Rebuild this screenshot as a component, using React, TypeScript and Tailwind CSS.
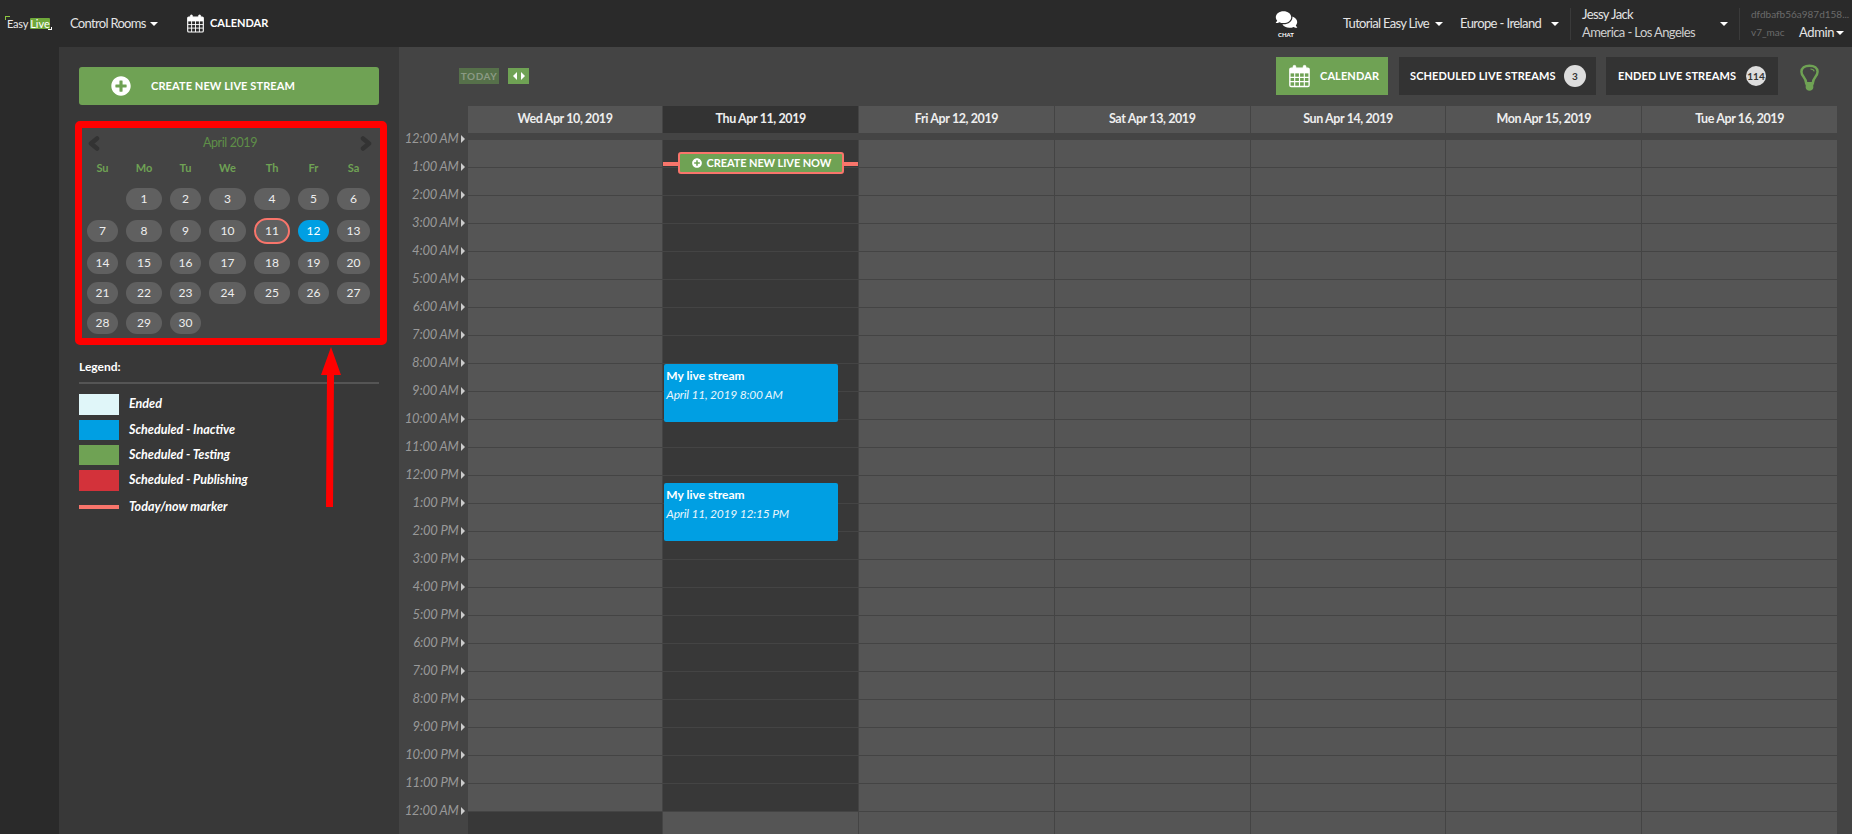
import { FaComments, FaPlusCircle } from "react-icons/fa";

const times = [
  "12:00 AM", "1:00 AM", "2:00 AM", "3:00 AM", "4:00 AM", "5:00 AM", "6:00 AM", "7:00 AM", "8:00 AM",
  "9:00 AM", "10:00 AM", "11:00 AM", "12:00 PM", "1:00 PM", "2:00 PM", "3:00 PM", "4:00 PM", "5:00 PM",
  "6:00 PM", "7:00 PM", "8:00 PM", "9:00 PM", "10:00 PM", "11:00 PM", "12:00 AM",
];

const days = [
  "Wed Apr 10, 2019", "Thu Apr 11, 2019", "Fri Apr 12, 2019", "Sat Apr 13, 2019",
  "Sun Apr 14, 2019", "Mon Apr 15, 2019", "Tue Apr 16, 2019",
];

const weekdays = ["Su", "Mo", "Tu", "We", "Th", "Fr", "Sa"];
const monthGrid = "grid grid-cols-[31px_36px_31px_37px_36px_31px_33px] gap-x-[8px]";

const weeks = [
  { cls: "mt-[10px]", cells: [0, 1, 2, 3, 4, 5, 6] },
  { cls: "mt-[10px]", cells: [7, 8, 9, 10, 11, 12, 13] },
  { cls: "mt-[10px]", cells: [14, 15, 16, 17, 18, 19, 20] },
  { cls: "mt-[8px]", cells: [21, 22, 23, 24, 25, 26, 27] },
  { cls: "mt-[8px]", cells: [28, 29, 30, 0, 0, 0, 0] },
];

const legend = [
  { label: "Ended", cls: "h-[21px] bg-[#e0f6f9]" },
  { label: "Scheduled - Inactive", cls: "h-[20px] bg-[#009fe3]" },
  { label: "Scheduled - Testing", cls: "h-[20px] bg-[#6fa254]" },
  { label: "Scheduled - Publishing", cls: "h-[21px] bg-[#d3323a]" },
];

const Caret = () => (
  <span className="inline-block w-0 h-0 border-x-[4px] border-x-transparent border-t-[4px] border-t-white" />
);

const CalendarIcon = ({ className }: { className: string }) => (
  <svg viewBox="0 0 24 26" className={className} fill="none" stroke="currentColor">
    <rect x="1" y="4" width="22" height="21" rx="1.5" strokeWidth="1.6" />
    <rect x="1" y="4" width="22" height="6" fill="currentColor" stroke="none" />
    <path d="M1 14.500h22M1 19.500h22M6.500 9v16M12 9v16M17.500 9v16" strokeWidth="1.3" />
    <rect x="4.500" y="0.800" width="3.400" height="6" rx="1.700" fill="currentColor" strokeWidth="0.600" />
    <rect x="16.100" y="0.800" width="3.400" height="6" rx="1.700" fill="currentColor" strokeWidth="0.600" />
  </svg>
);

const Bulb = () => (
  <svg viewBox="0 0 20 29" className="w-[19px] h-[28px] text-[#6fa254]" fill="none" stroke="currentColor">
    <path d="M6.500 20c0-3-1-4.500-2.800-6.800C2.300 11.400 1.500 9.800 1.500 8 1.500 4 5 1.500 10 1.500S18.500 4 18.500 8c0 1.800-.8 3.400-2.200 5.200C14.500 15.500 13.500 17 13.500 20z" strokeWidth="2.600" />
    <path d="M11 5c2 0 3.500 1 4 2.500" strokeWidth="1.200" />
    <path d="M6 20.500h8v4c0 2-1.800 3.500-4 3.500s-4-1.500-4-3.500z" fill="currentColor" stroke="none" />
  </svg>
);

const Chevron = ({ d }: { d: string }) => (
  <svg viewBox="0 0 12 15" className="w-[12px] h-[15px]" fill="none" stroke="currentColor" strokeWidth="4.500" strokeLinecap="round" strokeLinejoin="round">
    <path d={d} />
  </svg>
);

const Logo = () => (
  <div className="relative w-[47px] h-[13px] ml-[5px] flex items-center text-[11px] leading-none text-[#e8e8e8]">
    <span className="absolute left-0 -top-[1px] w-[5px] h-[4px] border-l border-t border-[#8dc63f]" />
    <span className="w-[25px] pl-[2px] tracking-[-0.2px]">Easy</span>
    <span className="w-[20px] h-[11px] bg-[#6fa83a] rounded-[1px] text-white text-center leading-[11px]">Live</span>
    <span className="absolute right-0 bottom-0 w-[4px] h-[3px] border-r border-b border-white" />
  </div>
);

const TopBar = () => (
  <header className="h-[47px] bg-[#2a2a2a] flex items-center text-white text-[13px] shrink-0 whitespace-nowrap">
    <Logo />
    <div className="ml-[18px] w-[88px] flex items-center justify-between text-[#e4e4e4] tracking-[-0.7px]">
      <span>Control Rooms</span>
      <Caret />
    </div>
    <CalendarIcon className="ml-[29px] w-[17px] h-[19px]" />
    <span className="ml-[6px] text-[11px] font-bold">CALENDAR</span>

    <div className="ml-auto flex items-center h-full">
      <div className="w-[24px] flex flex-col items-center">
        <FaComments className="w-[23px] h-[19px]" />
        <span className="text-[6px] font-bold mt-[3px] leading-none">CHAT</span>
      </div>
      <div className="ml-[45px] w-[100px] flex items-center justify-between text-[#e4e4e4] tracking-[-0.7px]">
        <span>Tutorial Easy Live</span>
        <Caret />
      </div>
      <div className="ml-[17px] w-[99px] flex items-center justify-between text-[#e4e4e4] tracking-[-0.6px]">
        <span>Europe - Ireland</span>
        <Caret />
      </div>
      <div className="ml-[11px] h-[32px] w-[1px] bg-[#3a3a3a]" />
      <div className="ml-[11px] w-[138px] flex flex-col gap-[3px] leading-[15px] text-[#cfcfcf] tracking-[-0.6px]">
        <span className="text-[#e4e4e4]">Jessy Jack</span>
        <span>America - Los Angeles</span>
      </div>
      <Caret />
      <div className="ml-[11px] h-[32px] w-[1px] bg-[#3a3a3a]" />
      <div className="ml-[11px] w-[101px] flex flex-col gap-[3px] leading-[15px]">
        <span className="text-[10px] text-[#6a6a6a]">dfdbafb56a987d158...</span>
        <div className="flex items-center">
          <span className="text-[10px] text-[#6a6a6a] w-[48px]">v7_mac</span>
          <span className="text-[13px] text-[#e4e4e4] tracking-[-0.4px]">Admin</span>
          <span className="ml-[2px] flex"><Caret /></span>
        </div>
      </div>
    </div>
  </header>
);

const MiniCalendar = () => (
  <div className="mt-[16px] -ml-[4px] w-[312px] h-[224px] border-[7px] border-[#ff0000] rounded-[5px] bg-[#444444] pl-[5px]">
    <div className="flex items-center justify-between h-[30px] pl-[1px] pr-[8px] text-[#333333]">
      <Chevron d="M9 2.500L3 7.500L9 12.500" />
      <span className="text-[12.500px] tracking-[-0.4px] text-[#5f8f48]">April 2019</span>
      <Chevron d="M3 2.500L9 7.500L3 12.500" />
    </div>
    <div className={`${monthGrid} h-[20px] items-center text-center text-[11px] font-bold text-[#6fa254]`}>
      {weekdays.map((d) => (
        <span key={d}>{d}</span>
      ))}
    </div>
    {weeks.map((w) => (
      <div key={w.cells[1]} className={`${monthGrid} ${w.cls} h-[22px]`}>
        {w.cells.map((d, i) =>
          d === 0 ? (
            <span key={i} />
          ) : (
            <div
              key={i}
              className={
                d === 12
                  ? "flex items-center justify-center rounded-full text-[12px] text-white bg-[#009fe3]"
                  : d === 11
                    ? "flex items-center justify-center rounded-full text-[12px] text-[#eeeeee] bg-[#606060] -my-[2px] border-2 border-[#f9756b]"
                    : "flex items-center justify-center rounded-full text-[12px] text-[#eeeeee] bg-[#606060]"
              }
            >
              {d}
            </div>
          ),
        )}
      </div>
    ))}
  </div>
);

const Sidebar = () => (
  <aside className="relative w-[340px] bg-[#383838] pl-[20px] pt-[20px] shrink-0">
    <div className="w-[300px] h-[38px] bg-[#6fa254] rounded-[3px] flex items-center pl-[32px] text-white">
      <FaPlusCircle className="w-[20px] h-[20px]" />
      <span className="ml-[20px] text-[11px] font-bold tracking-[0.1px]">CREATE NEW LIVE STREAM</span>
    </div>
    <MiniCalendar />
    <div className="mt-[13px] text-[12px] font-bold text-white h-[18px] leading-[18px]">Legend:</div>
    <div className="mt-[6px] w-[300px] h-[2px] bg-[#555555]" />
    <div className="mt-[10px]">
      {legend.map((l) => (
        <div key={l.label} className="flex items-center mb-[5px]">
          <span className={`w-[40px] ${l.cls}`} />
          <span className="ml-[10px] text-[12.500px] italic font-bold text-white">{l.label}</span>
        </div>
      ))}
      <div className="flex items-center mt-[7px]">
        <span className="w-[40px] h-[4px] bg-[#f9756b]" />
        <span className="ml-[10px] text-[12.500px] italic font-bold text-white">Today/now marker</span>
      </div>
    </div>
    {/* annotation arrow */}
    <svg className="absolute left-[261px] top-[300px] w-[22px] h-[160px]" viewBox="0 0 22 160">
      <path d="M11 0L21 28H14L13 160H6L7 28H1Z" fill="#ff0000" />
    </svg>
  </aside>
);

const Toolbar = () => (
  <div className="h-[59px] flex items-start shrink-0 whitespace-nowrap">
    <div className="ml-[60px] mt-[21px] w-[40px] h-[16px] bg-[#56704a] flex items-center justify-center text-[10px] font-bold tracking-[0.5px] text-[#8b9a84]">
      TODAY
    </div>
    <div className="ml-[9px] mt-[21px] w-[21px] h-[16px] bg-[#6fa254] flex items-center justify-center gap-[4px]">
      <span className="w-0 h-0 border-y-[4px] border-y-transparent border-r-[4px] border-r-white" />
      <span className="w-0 h-0 border-y-[4px] border-y-transparent border-l-[4px] border-l-white" />
    </div>
    <div className="ml-auto mt-[10px] flex items-center mr-[33px] text-white text-[11px] font-bold tracking-[0.1px]">
      <div className="w-[112px] h-[38px] bg-[#6fa254] flex items-center pl-[13px] gap-[10px]">
        <CalendarIcon className="w-[21px] h-[24px]" />
        <span>CALENDAR</span>
      </div>
      <div className="ml-[11px] w-[197px] h-[38px] bg-[#333333] flex items-center pl-[11px]">
        <span>SCHEDULED LIVE STREAMS</span>
        <span className="ml-auto mr-[10px] w-[22px] h-[22px] rounded-full bg-[#dddddd] text-[#333333] text-[10px] tracking-normal flex items-center justify-center">3</span>
      </div>
      <div className="ml-[10px] w-[172px] h-[38px] bg-[#333333] flex items-center pl-[12px]">
        <span>ENDED LIVE STREAMS</span>
        <span className="ml-auto mr-[12px] w-[20px] h-[20px] rounded-full bg-[#dddddd] text-[#333333] text-[10px] tracking-normal flex items-center justify-center">114</span>
      </div>
      <div className="ml-[22px] mt-[3px]">
        <Bulb />
      </div>
    </div>
  </div>
);

const DayColumn = ({ idx, label }: { idx: number; label: string }) => {
  const today = idx === 1;
  return (
    <div className="relative flex flex-col border-r border-[#444444] min-w-0">
      <div className={`h-[27px] flex items-center justify-center text-[12.500px] font-bold tracking-[-0.4px] text-[#eeeeee] ${today ? "bg-[#333333]" : "bg-[#555555]"}`}>
        {label}
      </div>
      <div className="h-[7px]" />
      {times.slice(1).map((t, i) => (
        <div key={t + i} className={`h-[28px] shrink-0 border-b border-[#444444] ${today ? "bg-[#383838]" : "bg-[#555555]"}`} />
      ))}
      <div className={`flex-1 ${idx === 0 ? "bg-[#383838]" : "bg-[#555555]"}`} />
      {today && (
        <>
          <div className="absolute left-0 right-0 top-[56px] h-[4px] bg-[#f9756b]" />
          <div className="absolute left-[15px] top-[46px] w-[166px] h-[22px] bg-[#6fa254] border-2 border-[#f9756b] rounded-[3px] flex items-center justify-center gap-[5px] text-white text-[11px] font-bold tracking-[-0.1px] whitespace-nowrap">
            <FaPlusCircle className="w-[10px] h-[10px]" />
            <span>CREATE NEW LIVE NOW</span>
          </div>
          {[
            { top: "top-[258px]", date: "April 11, 2019 8:00 AM" },
            { top: "top-[377px]", date: "April 11, 2019 12:15 PM" },
          ].map((e) => (
            <div key={e.date} className={`absolute left-[1px] ${e.top} w-[174px] h-[58px] bg-[#009fe3] rounded-[2px] px-[2px] pt-[4px] text-white`}>
              <div className="text-[12px] font-bold leading-[16px]">My live stream</div>
              <div className="mt-[3px] text-[12px] italic tracking-[-0.2px] leading-[16px] text-[#e8f6fc]">{e.date}</div>
            </div>
          ))}
        </>
      )}
    </div>
  );
};

export default function App() {
  return (
    <div className="h-[834px] overflow-hidden flex flex-col bg-[#444444] font-['Lato','Liberation_Sans',sans-serif]">
      <TopBar />
      <div className="flex flex-1 min-h-0">
        <div className="w-[59px] bg-[#2a2a2a] shrink-0" />
        <Sidebar />
        <main className="flex-1 min-w-0 flex flex-col">
          <Toolbar />
          <div className="flex flex-1 min-h-0">
            <div className="w-[68.600px] shrink-0 pt-[19px]">
              {times.map((t, i) => (
                <div key={t + i} className="h-[28px] flex items-center justify-end pr-[3px] gap-[2px] text-[13px] italic tracking-[-0.2px] text-[#999999]">
                  <span>{t}</span>
                  <span className="w-0 h-0 border-y-[4px] border-y-transparent border-l-[4px] border-l-[#cccccc]" />
                </div>
              ))}
            </div>
            <div className="flex-1 min-w-0 grid grid-cols-7 mr-[14px]">
              {days.map((d, i) => (
                <DayColumn key={d} idx={i} label={d} />
              ))}
            </div>
          </div>
        </main>
      </div>
    </div>
  );
}
